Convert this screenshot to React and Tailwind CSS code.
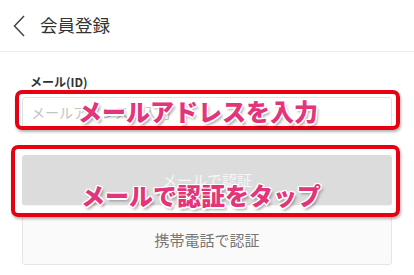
import React from "react";

const jp = { fontFamily: '"Noto Sans CJK JP", "Noto Sans", sans-serif' };

const Callout = ({ children, className }) => (
  <div
    className={`absolute font-black text-[24px] leading-none text-[#e2357a] ${className}`}
    style={{
      ...jp,
      textShadow:
        "1.5px 0 0 #fff, -1.5px 0 0 #fff, 0 1.5px 0 #fff, 0 -1.5px 0 #fff, 1px 1px 0 #fff, -1px -1px 0 #fff, 1px -1px 0 #fff, -1px 1px 0 #fff, 2px 3px 3px rgba(0,0,0,0.35)",
    }}
  >
    {children}
  </div>
);

const App = () => {
  return (
    <div className="relative w-[414px] h-[275px] bg-white overflow-hidden" style={jp}>
      {/* Header */}
      <div className="flex items-center h-[52px] border-b border-[#ececec]">
        <svg width="14" height="24" viewBox="0 0 14 24" className="ml-[12px]">
          <path d="M12 2 L2.5 12 L12 22" fill="none" stroke="#444" strokeWidth="1.5" />
        </svg>
        <span className="ml-[14px] text-[17.5px] text-[#333]">会員登録</span>
      </div>

      {/* Form */}
      <div className="flex flex-col px-[22px] pt-[22px]">
        <div className="pl-[8px] text-[12px] font-bold text-[#333] leading-[16px]">メール(ID)</div>
        <div className="mt-[7px] h-[31px] border border-[#e2e2e2] rounded-[3px] flex items-center pl-[8px] text-[14px] text-[#c4c4c4]">
          メールアドレスを入力
        </div>
        <div className="mt-[27px] h-[51px] rounded-[3px] bg-[#dcdcdc] border-b border-[#f4f4f4] flex items-center justify-center text-[15px] text-[#f7f7f7]">
          メールで認証
        </div>
        <div className="mt-[9px] h-[50px] rounded-[3px] bg-[#fafafa] border border-[#e6e6e6] flex items-center justify-center text-[15px] text-[#777]">
          携帯電話で認証
        </div>
      </div>

      {/* Annotation overlays */}
      <div className="absolute left-[15px] top-[90px] w-[385px] h-[40px] border-[4px] border-[#e60012] rounded-[7px] shadow-[1px_2px_3px_rgba(0,0,0,0.3)]" />
      <div className="absolute left-[11px] top-[145px] w-[389px] h-[72px] border-[4px] border-[#e60012] rounded-[7px] shadow-[1px_2px_3px_rgba(0,0,0,0.3)]" />
      <Callout className="left-[78px] top-[99px]">メールアドレスを入力</Callout>
      <Callout className="left-[81px] top-[183px]">メールで認証をタップ</Callout>
    </div>
  );
};

export default App;
